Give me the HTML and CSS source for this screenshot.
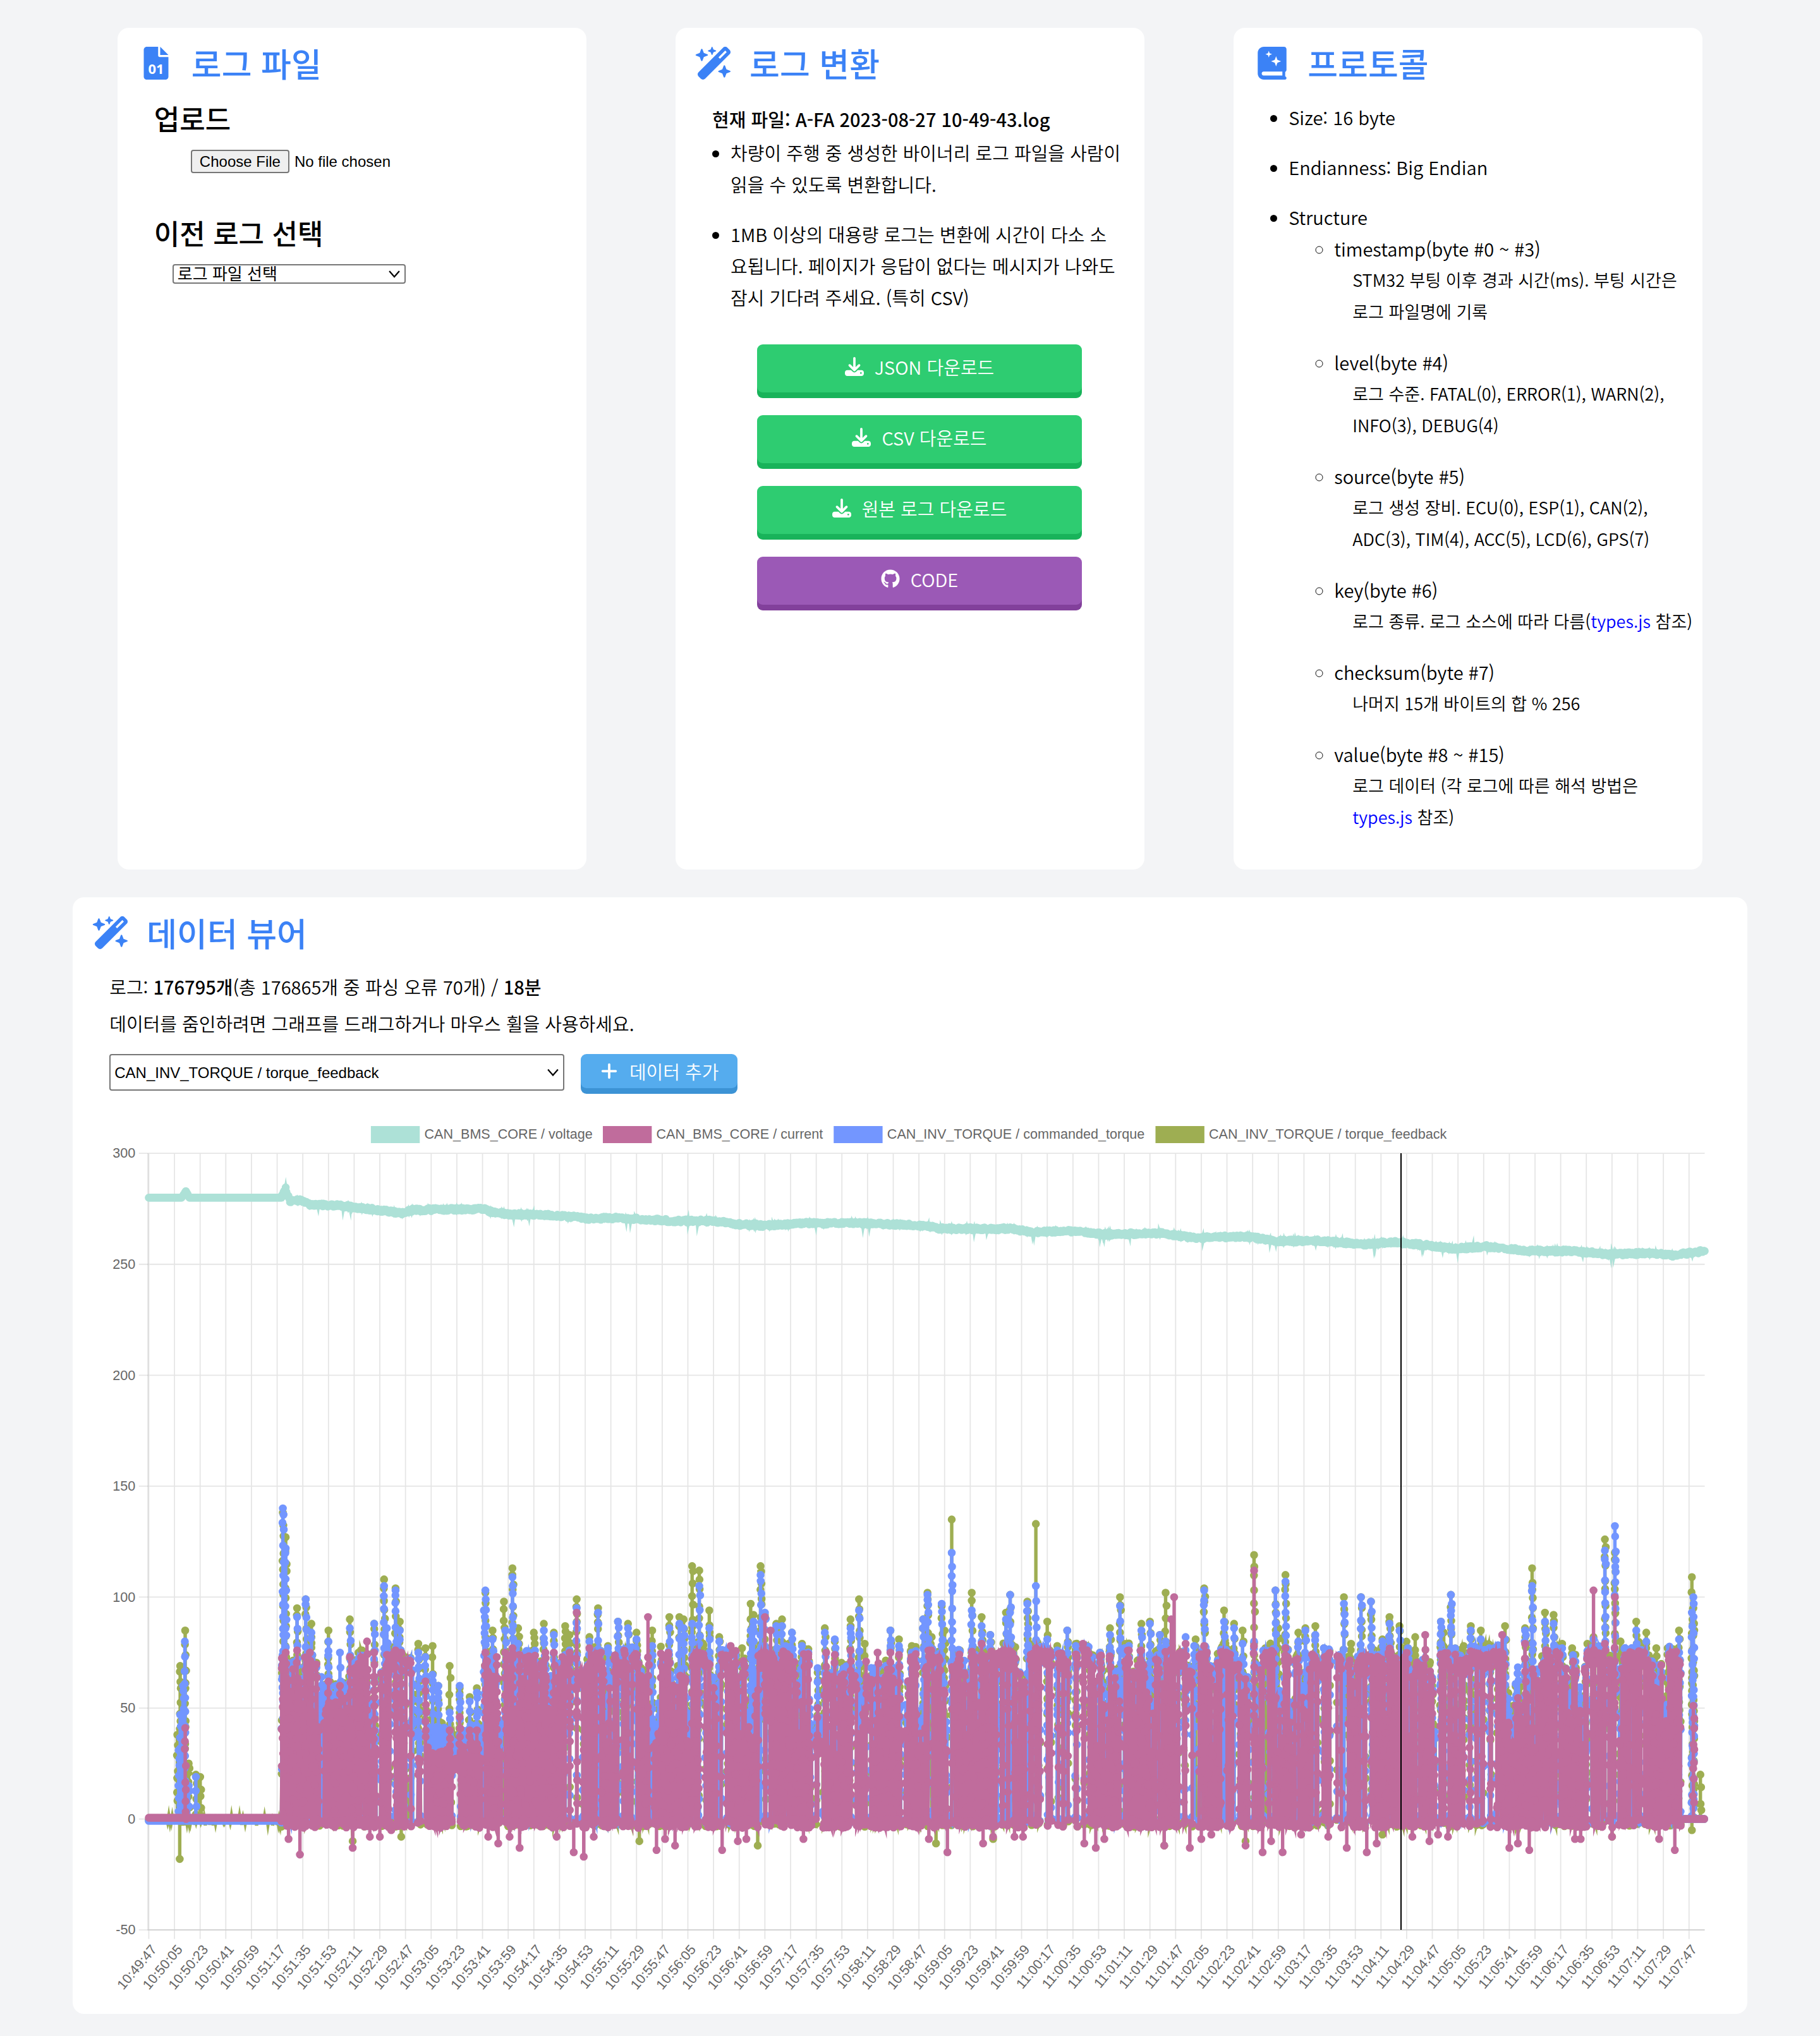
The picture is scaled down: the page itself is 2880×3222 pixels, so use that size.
FILE: index.html
```html
<!DOCTYPE html>
<html lang="ko">
<head>
<meta charset="utf-8">
<meta name="viewport" content="width=device-width, initial-scale=1">
<title>로그 변환</title>
<link rel="stylesheet" href="styles.css">
</head>
<body>
<svg class="defs" aria-hidden="true">
  <symbol id="i-wand" viewBox="0 0 576 512"><path d="M234.7 42.7L197 56.8c-3 1.1-5 4-5 7.2s2 6.1 5 7.2l37.7 14.1L248.8 123c1.1 3 4 5 7.2 5s6.1-2 7.2-5l14.1-37.7L315 71.2c3-1.1 5-4 5-7.2s-2-6.1-5-7.2L277.3 42.7 263.2 5c-1.1-3-4-5-7.2-5s-6.1 2-7.2 5L234.7 42.7zM46.1 395.4c-18.7 18.7-18.7 49.1 0 67.9l34.6 34.6c18.7 18.7 49.1 18.7 67.9 0L529.9 116.5c18.7-18.7 18.7-49.1 0-67.9L495.3 14.1c-18.7-18.7-49.1-18.7-67.9 0L46.1 395.4zM484.6 82.6l-105 105-23.3-23.3 105-105 23.3 23.3zM7.5 117.2C3 118.9 0 123.2 0 128s3 9.1 7.5 10.8L64 160l21.2 56.5c1.7 4.5 6 7.5 10.8 7.5s9.1-3 10.8-7.5L128 160l56.5-21.2c4.5-1.7 7.5-6 7.5-10.8s-3-9.1-7.5-10.8L128 96 106.8 39.5C105.1 35 100.8 32 96 32s-9.1 3-10.8 7.5L64 96 7.5 117.2zm352 256c-4.5 1.7-7.5 6-7.5 10.8s3 9.1 7.5 10.8L416 416l21.2 56.5c1.7 4.5 6 7.5 10.8 7.5s9.1-3 10.8-7.5L480 416l56.5-21.2c4.5-1.7 7.5-6 7.5-10.8s-3-9.1-7.5-10.8L480 352l-21.2-56.5c-1.7-4.5-6-7.5-10.8-7.5s-9.1 3-10.8 7.5L416 352l-56.5 21.2z"/></symbol>
  <symbol id="i-download" viewBox="0 0 512 512"><path d="M288 32c0-17.7-14.3-32-32-32s-32 14.3-32 32V274.7l-73.4-73.4c-12.5-12.5-32.8-12.5-45.3 0s-12.5 32.8 0 45.3l128 128c12.5 12.5 32.8 12.5 45.3 0l128-128c12.5-12.5 12.5-32.8 0-45.3s-32.8-12.5-45.3 0L288 274.7V32zM64 352c-35.3 0-64 28.7-64 64v32c0 35.3 28.7 64 64 64H448c35.3 0 64-28.7 64-64V416c0-35.3-28.7-64-64-64H346.5l-45.3 45.3c-25 25-65.5 25-90.5 0L165.5 352H64zm368 56a24 24 0 1 1 0 48 24 24 0 1 1 0-48z"/></symbol>
  <symbol id="i-chevron" viewBox="0 0 16 16"><path d="M1 4l7 8 7-8" fill="none" stroke="#000" stroke-width="2"/></symbol>
</svg>

<main class="page">
  <div class="cards">
    <section class="card">
      <h2 class="title">
        <svg class="title-icon" viewBox="0 0 384 512" aria-hidden="true"><path d="M224 136V0H48C21 0 0 21 0 48v416c0 27 21 48 48 48h288c27 0 48-21 48-48V160H248c-13.200 0-24-10.800-24-24z"/><path d="M256 0v128h128z"/><text class="icon-digits" x="192" y="420">01</text></svg>
        로그 파일
      </h2>
      <h3 class="subtitle"><label for="upload">업로드</label></h3>
      <input class="file" id="upload" type="file">
      <h3 class="subtitle subtitle-next"><label for="previous">이전 로그 선택</label></h3>
      <div class="select-wrap select-previous">
        <select class="select" id="previous"><option>로그 파일 선택</option></select>
        <svg class="chevron" aria-hidden="true"><use href="#i-chevron"/></svg>
      </div>
    </section>

    <section class="card">
      <h2 class="title">
        <svg class="title-icon" aria-hidden="true"><use href="#i-wand"/></svg>
        로그 변환
      </h2>
      <p class="current">현재 파일: A-FA 2023-08-27 10-49-43.log</p>
      <ul class="list list-notes">
        <li>차량이 주행 중 생성한 바이너리 로그 파일을 사람이 읽을 수 있도록 변환합니다.</li>
        <li>1MB 이상의 대용량 로그는 변환에 시간이 다소 소요됩니다. 페이지가 응답이 없다는 메시지가 나와도 잠시 기다려 주세요. (특히 CSV)</li>
      </ul>
      <div class="actions">
        <button class="btn btn-green" type="button"><svg class="btn-icon" aria-hidden="true"><use href="#i-download"/></svg>JSON 다운로드</button>
        <button class="btn btn-green" type="button"><svg class="btn-icon" aria-hidden="true"><use href="#i-download"/></svg>CSV 다운로드</button>
        <button class="btn btn-green" type="button"><svg class="btn-icon" aria-hidden="true"><use href="#i-download"/></svg>원본 로그 다운로드</button>
        <button class="btn btn-purple" type="button"><svg class="btn-icon" viewBox="0 0 496 512" aria-hidden="true"><path d="M165.900 397.400c0 2-2.300 3.600-5.200 3.600-3.300.3-5.600-1.300-5.600-3.600 0-2 2.300-3.600 5.200-3.600 3-.3 5.600 1.300 5.600 3.600zM244.800 8C106.100 8 0 113.300 0 252c0 110.900 69.800 205.800 169.500 239.200 12.800 2.300 17.300-5.600 17.300-12.100 0-6.200-.3-40.400-.3-61.400 0 0-70 15-84.700-29.800 0 0-11.400-29.100-27.800-36.600 0 0-22.900-15.700 1.600-15.400 0 0 24.900 2 38.600 25.800 21.900 38.600 58.600 27.500 72.900 20.900 2.300-16 8.800-27.100 16-33.700-55.900-6.200-112.300-14.300-112.300-110.500 0-27.500 7.600-41.300 23.600-58.900-2.600-6.500-11.100-33.300 2.600-67.900 20.900-6.500 69 27 69 27 20-5.600 41.500-8.500 62.800-8.500s42.800 2.900 62.800 8.500c0 0 48.100-33.600 69-27 13.700 34.700 5.200 61.400 2.600 67.900 16 17.700 25.800 31.500 25.800 58.900 0 96.500-58.900 104.200-114.800 110.500 9.200 7.900 17 22.900 17 46.400 0 33.700-.3 75.400-.3 83.600 0 6.500 4.600 14.400 17.300 12.100C428.200 457.800 496 362.900 496 252 496 113.300 383.500 8 244.800 8z"/></svg>CODE</button>
      </div>
    </section>

    <section class="card">
      <h2 class="title">
        <svg class="title-icon" viewBox="0 0 448 512" aria-hidden="true"><path fill-rule="evenodd" d="M448 360V40c0-24-16-40-40-40H96C43 0 0 43 0 96v320c0 53 43 96 96 96h328c16 0 24-10 24-24 0-14-8-24-20-26v-70c12-6 20-17 20-32zM384 448H92c-40 0-40-62 0-62h292zM172 64l13 38 39 14-39 14-13 38-13-38-39-14 39-14zM286 148l21 57 57 22-57 22-21 57-21-57-57-22 57-22z"/></svg>
        프로토콜
      </h2>
      <ul class="list">
        <li>Size: 16 byte</li>
        <li>Endianness: Big Endian</li>
        <li>Structure
          <ul class="fields">
            <li>timestamp(byte #0 ~ #3)<p class="detail">STM32 부팅 이후 경과 시간(ms). 부팅 시간은 로그 파일명에 기록</p></li>
            <li>level(byte #4)<p class="detail">로그 수준. FATAL(0), ERROR(1), WARN(2), INFO(3), DEBUG(4)</p></li>
            <li>source(byte #5)<p class="detail">로그 생성 장비. ECU(0), ESP(1), CAN(2), ADC(3), TIM(4), ACC(5), LCD(6), GPS(7)</p></li>
            <li>key(byte #6)<p class="detail">로그 종류. 로그 소스에 따라 다름(<a href="#types">types.js</a> 참조)</p></li>
            <li>checksum(byte #7)<p class="detail">나머지 15개 바이트의 합 % 256</p></li>
            <li>value(byte #8 ~ #15)<p class="detail">로그 데이터 (각 로그에 따른 해석 방법은 <a href="#types">types.js</a> 참조)</p></li>
          </ul>
        </li>
      </ul>
    </section>
  </div>

  <section class="card viewer">
    <h2 class="title">
      <svg class="title-icon" aria-hidden="true"><use href="#i-wand"/></svg>
      데이터 뷰어
    </h2>
    <div class="viewer-body">
      <p>로그: <b>176795개</b>(총 176865개 중 파싱 오류 70개) / <b>18분</b></p>
      <p>데이터를 줌인하려면 그래프를 드래그하거나 마우스 휠을 사용하세요.</p>
      <div class="toolbar">
        <div class="select-wrap select-series">
          <select class="select" aria-label="데이터 선택"><option>CAN_INV_TORQUE / torque_feedback</option></select>
          <svg class="chevron" aria-hidden="true"><use href="#i-chevron"/></svg>
        </div>
        <button class="btn btn-blue" type="button"><svg class="btn-icon" viewBox="0 0 448 512" aria-hidden="true"><path d="M256 80c0-17.700-14.300-32-32-32s-32 14.300-32 32V224H48c-17.700 0-32 14.300-32 32s14.300 32 32 32H192V432c0 17.700 14.300 32 32 32s32-14.300 32-32V288H400c17.700 0 32-14.300 32-32s-14.300-32-32-32H256V80z"/></svg>데이터 추가</button>
      </div>
      <svg class="chart" id="chart" viewBox="0 0 1408 770" role="img" aria-label="시간별 로그 데이터"></svg>
    </div>
  </section>
</main>
<script src="chart.js"></script>
</body>
</html>
```

FILE: styles.css
```css
* {
  box-sizing: border-box;
}

body {
  margin: 0;
  background: #f3f4f6;
  color: #000;
  font-family: "Noto Sans CJK KR", sans-serif;
  font-size: 29px;
  font-weight: 350;
  line-height: 50px;
}

h2,
h3,
p,
ul {
  margin: 0;
}

b {
  font-weight: 500;
}

a {
  color: #00f;
  text-decoration: none;
}

.defs {
  position: absolute;
  width: 0;
  height: 0;
}

.page {
  display: flex;
  flex-direction: column;
  gap: 44px;
  width: 92%;
  margin: 0 auto;
  padding: 44px 0 32px;
}

.cards {
  display: flex;
  justify-content: space-around;
}

.card {
  width: 28%;
  padding: 30px 10px 28px 29px;
  border-radius: 18px;
  background: #fff;
}

.viewer {
  width: 100%;
}

.title {
  display: flex;
  align-items: center;
  gap: 24px;
  margin-bottom: 34px;
  color: #3b82f6;
  font-size: 52px;
  font-weight: 500;
  line-height: 52px;
}

.title-icon {
  width: 64px;
  height: 52px;
  fill: currentColor;
}

.icon-digits {
  fill: #fff;
  font-family: "Noto Sans", sans-serif;
  font-size: 216px;
  font-weight: 700;
  text-anchor: middle;
}

/* Log file card */

.subtitle {
  padding-left: 29px;
  font-size: 44px;
  font-weight: 500;
  line-height: 54px;
}

.subtitle-next {
  margin-top: 67px;
}

.file {
  display: block;
  margin: 23px 0 0 87px;
  font-family: "Liberation Sans", sans-serif;
  font-size: 24px;
  line-height: 27px;
}

.file::file-selector-button {
  height: 37px;
  margin-right: 8px;
  padding: 0 12px;
  border: 2px solid #767676;
  border-radius: 4px;
  background: #efefef;
  font: inherit;
}

.select-wrap {
  position: relative;
}

.select {
  display: block;
  width: 100%;
  height: 100%;
  padding: 0 6px;
  border: 2px solid #767676;
  border-radius: 4px;
  appearance: none;
  background: #fff;
  color: #000;
  font-family: "Liberation Sans", "Noto Sans CJK KR", sans-serif;
  font-size: 24px;
}

.chevron {
  position: absolute;
  top: 0;
  right: 9px;
  width: 18px;
  height: 100%;
  pointer-events: none;
}

.select-previous {
  width: 369px;
  height: 31px;
  margin: 23px 0 0 58px;
}

.select-previous .select {
  font-size: 26px;
  line-height: 26px;
}

/* Conversion card */

.current {
  padding-left: 29px;
  font-weight: 500;
  line-height: 56px;
}

.list {
  padding-left: 58px;
}

.list li {
  margin-bottom: 29px;
}

.list-notes {
  padding-right: 23px;
}

.actions {
  display: flex;
  flex-direction: column;
  gap: 36px;
  padding: 21px 89px 9px 100px;
}

.btn {
  display: flex;
  align-items: center;
  justify-content: center;
  gap: 17px;
  height: 76px;
  padding: 0 0 6px;
  border: 0;
  border-radius: 9px;
  color: #fff;
  font-family: inherit;
  font-size: 29px;
  font-weight: 350;
}

.btn-icon {
  width: 30px;
  height: 30px;
  fill: currentColor;
}

.btn-green {
  background: #2ecc71;
  box-shadow: 0 9px 0 #18b35a;
}

.btn-purple {
  background: #9b59b6;
  box-shadow: 0 9px 0 #82409b;
}

.btn-blue {
  width: 248px;
  height: 54px;
  padding: 0;
  background: #55acee;
  box-shadow: 0 9px 0 #3c93d5;
}

/* Protocol card */

.fields {
  padding-left: 72px;
}

.list .fields li {
  margin-bottom: 30px;
}

.detail {
  padding-left: 29px;
  font-size: 27px;
}

/* Viewer */

.viewer .title {
  margin-bottom: 30px;
}

.viewer-body {
  padding: 0 48px 0 29px;
  line-height: 58px;
}

.toolbar {
  display: flex;
  gap: 26px;
  margin: 20px 0 47px;
}

.select-series {
  width: 720px;
  height: 58px;
}

.chart {
  display: block;
  width: 100%;
  height: auto;
  font-family: "Liberation Sans", sans-serif;
  font-size: 12px;
}

.chart text {
  fill: #666;
}

.y-label,
.x-label {
  text-anchor: end;
}

.grid {
  fill: none;
  stroke: #000;
  stroke-opacity: 0.1;
}

.line {
  fill: none;
  stroke-width: 3;
  stroke-miterlimit: 7;
}

.dots {
  fill: none;
  stroke-width: 7;
  stroke-linecap: round;
}

.voltage {
  stroke: #ade1d7;
}

.current-a {
  stroke: #c06c9c;
}

.commanded {
  stroke: #7396ff;
}

.feedback {
  stroke: #9eae52;
}

.cursor {
  stroke: #000;
  shape-rendering: crispEdges;
}
```

FILE: chart.js
```js
const svg = document.getElementById('chart');
const NS = 'http://www.w3.org/2000/svg';

const area = { left: 34, right: 1403, top: 29, bottom: 712 };
const duration = 1091;
const min = -50;
const max = 300;
const startTime = 10 * 3600 + 49 * 60 + 47;

const px = t => area.left + 0.7 + (t * (area.right - area.left - 0.7)) / duration;
const py = v => area.bottom - ((v - min) * (area.bottom - area.top)) / (max - min);

function add(name, attrs, text) {
  const el = document.createElementNS(NS, name);
  for (const key in attrs) el.setAttribute(key, attrs[key]);
  if (text) el.textContent = text;
  svg.appendChild(el);
  return el;
}

let seed = 7;
function rand() {
  seed = (seed * 16807) % 2147483647;
  return seed / 2147483647;
}

function clock(t) {
  const s = startTime + t;
  return [s / 3600, (s / 60) % 60, s % 60].map(n => String(Math.floor(n)).padStart(2, '0')).join(':');
}

/* Legend */
const series = [
  ['CAN_BMS_CORE / voltage', 'voltage', 230],
  ['CAN_BMS_CORE / current', 'current-a', 434],
  ['CAN_INV_TORQUE / commanded_torque', 'commanded', 637],
  ['CAN_INV_TORQUE / torque_feedback', 'feedback', 920]
];
const colors = { voltage: '#ade1d7', 'current-a': '#c06c9c', commanded: '#7396ff', feedback: '#9eae52' };
for (const [label, name, x] of series) {
  add('rect', { x, y: 5, width: 43, height: 15, fill: colors[name] });
  add('text', { x: x + 47, y: 16 }, label);
}

/* Grid and axis labels */
let grid = '';
for (let v = min; v <= max; v += 50) {
  grid += `M26 ${py(v)}H${area.right}`;
  add('text', { x: 23, y: py(v) + 4, class: 'y-label' }, String(v));
}
for (let t = 0; t < duration; t += 18) {
  grid += `M${px(t)} ${area.top}V720`;
  add('text', { transform: `translate(${px(t)} 723) rotate(-50)`, y: 10, class: 'x-label' }, clock(t));
}
add('path', { class: 'grid', d: grid });
add('path', { class: 'grid', d: `M${area.left} ${area.top}V${area.bottom}H${area.right}` });

/* Recorded peaks: second, value */
const feedbackPeaks = [20,38,22,69,25.5,85,28,25,33,20,36,19,94,138,96,127,104,95,110,99,114,88,126,85,141,90,147,75,158,88,165,108,173,104,176,89,185,60,189,79,194,77,199,78,203,60,211,69,218,59,225,55,230,59,236,102,241,85,249,98,255,113,259,86,266,73,270,84,277,88,284,84,292,87,295,83,300,99,309,82,315,95,322,78,329,89,336,88,342,84,353,85,365,91,372,91,375,90,381,114,386,112,393,94,400,82,416,77,422,97,424,92,429,114,432,92,440,88,444,90,451,84,458,79,469,66,474,86,481,80,492,90,498,99,502,79,513,67,520,85,526,81,535,78,543,90,546,102,549,82,556,96,558,85,563,135,570,57,577,102,584,91,590,83,595,65,601,93,604,101,616,98,622,133,630,89,637,78,644,85,650,79,667,75,674,86,681,100,684,78,696,88,702,89,709,83,713,102,734,81,740,104,754,94,761,88,767,85,775,119,783,77,790,103,792,86,797,110,806,84,811,86,818,87,824,77,838,100,843,79,850,100,857,98,865,81,870,91,877,87,883,77,888,82,906,89,908,84,913,101,922,78,927,87,934,85,940,77,951,87,965,86,970,113,979,93,985,92,991,79,998,77,1013,82,1021,126,1028,120,1032,80,1043,89,1050,84,1057,77,1065,77,1073,85,1082,109,1083,95];
const commandedPeaks = [21,31,22,47,24,60,25.3,80,28,15,33,19,94,140,96,122,104,91,110,99,114,84,121,64,126,80,134,75,141,86,147,71,158,88,165,105,167,86,173,103,176,85,185,67,189,75,194,73,199,65,203,60,211,48,218,60,225,53,230,57,235,94,236,103,241,81,250,85,255,109,259,79,266,69,270,75,277,85,284,83,292,74,295,76,300,95,309,80,315,93,322,77,329,89,336,86,342,81,353,78,365,86,372,88,375,86,381,88,386,105,393,86,400,80,422,85,424,89,429,110,432,93,440,87,444,87,451,84,458,78,463,54,469,68,474,84,481,81,492,86,498,94,509,68,513,61,520,85,526,78,535,75,543,90,546,101,556,97,563,120,570,57,577,94,584,87,590,83,595,63,601,90,604,101,616,97,622,105,630,81,637,76,644,85,650,78,667,75,674,83,681,96,684,77,696,85,702,88,709,83,713,80,727,82,733,78,740,103,754,89,761,86,767,79,775,80,790,103,797,107,806,80,811,85,818,83,824,77,838,97,850,100,857,98,865,80,870,88,877,85,883,77,906,89,913,101,927,85,934,81,940,77,951,81,965,85,970,105,979,89,985,88,991,77,1013,81,1021,121,1028,132,1039,63,1043,85,1050,80,1073,81,1082,93,1083,100];
const currentPeaks = [25.5,41,94,54,96,75,104,76,113,75,126,62,134,60,141,73,147,70,153,80,158,75,167,74,173,76,177,75,194,62,211,40,218,46,225,40,230,40,236,75,244,73,250,75,255,77,260,74,266,61,270,62,278,75,284,75,290,73,295,75,300,93,309,77,317,75,350,91,408,78,432,91,436,85,469,50,475,75,481,74,492,76,503,71,511,75,520,75,526,74,537,70,584,79,622,77,655,79,717,90,719,100,727,79,740,78,775,112,797,77,895,83,949,83,965,79,1013,103,1021,79,1028,100,1083,51];
const currentDips = [98,-9,106,-16,143,-13,155,-8,162,-8,170,-5,238,-8,245,-11,253,-8,260,-13,286,-8,298,-15,305,-17,312,-8,356,-14,362,-9,369,-12,402,-14,413,-10,419,-9,459,-9,547,-9,560,-15,585,-11,592,-8,607,-8,613,-8,656,-11,664,-13,670,-9,712,-12,730,-13,738,-9,745,-7,769,-12,781,-15,787,-10,795,-15,808,-7,827,-8,840,-13,854,-15,861,-11,886,-8,898,-10,904,-7,911,-8,954,-13,960,-11,968,-14,1000,-9,1004,-9,1026,-8,1059,-9,1070,-14];
const feedbackDips = [21.7,-18,143,-10,177,-8,344,-10,427,-12,552,-11,592,-9,712,-12,769,-10,865,-7,1026,-8,1082,-5];

const pairs = list => list.flatMap((v, i) => (i % 2 ? [] : [[v, list[i + 1]]]));
const at = (t, v) => `${px(t).toFixed(1)} ${py(v).toFixed(1)}`;

/* Ceiling of the bursts and the share of bursts that reach it */
function ceiling(t) {
  if (t < 118) return [74, 0.7];
  if (t < 138) return [54, 0.5];
  if (t < 180) return [74, 0.6];
  if (t < 185) return [4, 1];
  if (t < 233) return [32, 0.4];
  if (t < 320) return [73, 0.55];
  if (t < 460) return [75, 0.75];
  if (t < 470) return [38, 0.4];
  if (t < 522) return [66, 0.3];
  if (t < 545) return [74, 0.5];
  return [75, 0.75];
}

function plot(name, points, spikes) {
  let line = '';
  let dots = '';
  points.forEach(([t, v, dotless], i) => {
    line += (i ? 'L' : 'M') + at(t, v);
    if (!dotless) dots += `M${at(t, v)}h0`;
  });
  for (const [t, v] of spikes) {
    const edge = t < 90 || t > 1078;
    const base = v < 0 || edge ? 0 : Math.min(v * 0.5, 45);
    line += `M${at(t, 0)}L${at(t, v)}`;
    dots += `M${at(t, v)}h0`;
    if (v < 0 || (v > 130 && name === 'feedback' && t > 100)) continue;
    for (let y = v - 2 - rand() * 5; y > base; y -= 2 + rand() * 6) {
      if (name === 'current-a' && y > 78) continue;
      dots += `M${at(t + rand() - 0.3, y)}h0`;
    }
  }
  add('path', { class: `line ${name}`, d: line });
  add('path', { class: `dots ${name}`, d: dots });
}

function idle(noise, floor) {
  const points = [];
  for (let t = 0; t < 93; t += 0.8) {
    points.push([t, floor]);
    if (noise && t > 12 && rand() < 0.4) points.push([t + 0.4, rand() < 0.7 ? -1 - rand() * 2 : 0.5 + rand(), true]);
  }
  return points;
}

/* Timeline of acceleration bursts shared by the three signals */
const timeline = [];
for (let t = 93; t < 1074; ) {
  const [top, share] = ceiling(t);
  if (rand() < share) {
    const hold = 0.5 + rand() * rand() * 5;
    timeline.push({ t, hold, top: top - rand() * rand() * 10 });
    t += hold + (rand() < 0.08 ? 5.5 : 0.9 + rand() * 0.8);
  } else {
    const count = 2 + Math.floor(rand() * 4);
    for (let i = 0; i < count; i++) {
      timeline.push({ t, hold: 0.2, top: Math.min(top, 30 + rand() * 46) });
      t += 1.6;
    }
    t += rand() < 0.2 ? 2.5 : 0.3;
  }
}

function bursts(extra, lift, floor) {
  const points = [];
  for (const burst of timeline) {
    const top = burst.top + rand() * extra + (burst.top > 5 && burst.top < 60 ? lift : 0);
    const end = burst.t + 0.5 + burst.hold;
    points.push([burst.t, floor - rand() * 4]);
    for (let y = 6 + rand() * 20; y < top; y += 8 + rand() * 30) points.push([burst.t + 0.1 + rand() * 0.3, y]);
    for (let t = burst.t + 0.4; t < end; t += 0.4) points.push([t, top - rand() * rand() * 9]);
    for (let y = top - 6; y > 3; y -= 8 + rand() * 30) points.push([end + rand() * 0.3, y]);
    points.push([end + 0.3, floor - rand() * 4]);
  }
  for (let t = 1077; t < duration; t += 0.8) points.push([t, 0]);
  return points;
}

plot('feedback', idle(true, -0.5).concat(bursts(6, 8, 0.5)), pairs(feedbackPeaks).concat(pairs(feedbackDips), [[181, 18], [182, 14], [1088, 20]]));
plot('commanded', idle(false, -0.8).concat(bursts(4, 8, 2)), pairs(commandedPeaks));
plot('current-a', idle(false, 0.6).concat(bursts(2, 0, 0)), pairs(currentPeaks).concat(pairs(currentDips)));

/* Battery voltage */
const knots = pairs([0,280,23,280,26,283,28.5,280,93,280,96,284,99,278.5,107,279,112,277,134,276.5,146,275.5,160,274.5,178,273,185,274.5,234,275,241,273.5,255,272.5,287,272,310,270.5,328,271,369,269.5,396,269.5,414,268,432,267.5,460,268.5,496,268.5,543,267.5,555,266,605,266,619,264.5,646,265,669,263.5,710,264,733,262,769,262.5,792,260.5,824,260.5,851,259,874,260,897,258.5,915,257,938,258,969,256,997,256,1024,254.5,1051,255,1069,254,1079,255,1091,256]);
const voltage = [];
for (let k = 0; k < knots.length - 1; k++) {
  const [t0, v0] = knots[k];
  const [t1, v1] = knots[k + 1];
  for (let t = t0; t < t1; t += 0.5) {
    const v = v0 + ((v1 - v0) * (t - t0)) / (t1 - t0);
    const jitter = t > 93 ? (rand() - 0.5) * 1.4 : 0;
    voltage.push([t, v + jitter]);
    if (t > 107 && rand() < 0.06) voltage.push([t + 0.25, v - 1 - rand() * 0.6, true]);
  }
}
voltage.push([duration, 256]);
plot('voltage', voltage, []);

/* Cursor line */
add('path', { class: 'cursor', d: `M1136 ${area.top}V${area.bottom}` });
```
